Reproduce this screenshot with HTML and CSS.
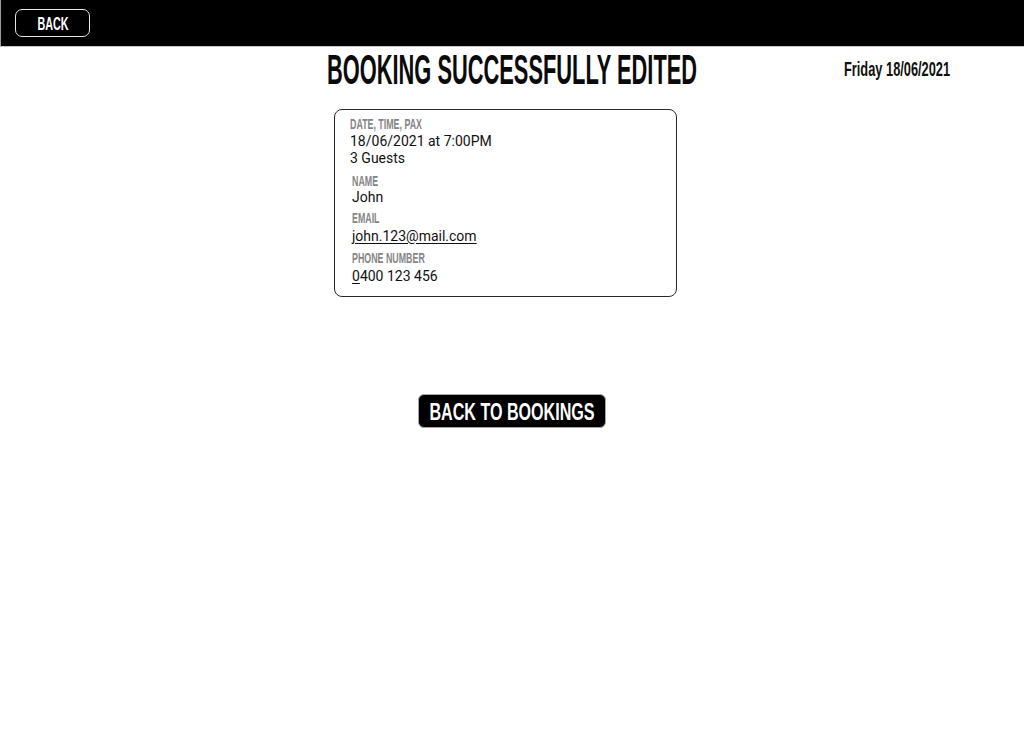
FILE: index.html
```html
<!DOCTYPE html>
<html lang="en">
<head>
<meta charset="utf-8">
<title>Booking Successfully Edited</title>
<link rel="stylesheet" href="styles.css">
</head>
<body>
<header class="topbar">
  <button class="back-btn" type="button"><span class="cond cond-back">BACK</span></button>
</header>
<main class="page">
  <div class="title-row">
    <div class="spacer"></div>
    <h1 class="title"><span class="cond cond-title">BOOKING SUCCESSFULLY EDITED</span></h1>
    <div class="date"><span class="cond cond-date">Friday 18/06/2021</span></div>
  </div>

  <section class="card">
    <div class="group g1">
      <div class="label"><span class="cond cond-label">DATE, TIME, PAX</span></div>
      <div class="value">18/06/2021 at 7:00PM</div>
      <div class="value">3 Guests</div>
    </div>
    <div class="group g2">
      <div class="label"><span class="cond cond-label">NAME</span></div>
      <div class="value">John</div>
    </div>
    <div class="group g3">
      <div class="label"><span class="cond cond-label">EMAIL</span></div>
      <div class="value tall"><span class="underline">john.123@mail.com</span></div>
    </div>
    <div class="group g4">
      <div class="label"><span class="cond cond-label">PHONE NUMBER</span></div>
      <div class="value tall"><span class="underline">0</span>400 123 456</div>
    </div>
  </section>

  <div class="actions">
    <button class="primary-btn" type="button"><span class="cond cond-primary">BACK TO BOOKINGS</span></button>
  </div>
</main>
</body>
</html>
```

FILE: styles.css
```css
* { box-sizing: border-box; }

html, body {
  margin: 0;
  padding: 0;
  background: #ffffff;
}

body {
  font-family: Roboto, "Liberation Sans", Arial, sans-serif;
  color: #111111;
}

/* condensed display text (Oswald-like) */
.cond {
  display: inline-block;
  font-family: "Liberation Sans", Arial, sans-serif;
  font-weight: bold;
  white-space: nowrap;
  transform-origin: left center;
}

/* Top bar */
.topbar {
  height: 47px;
  background: #000000;
  border-bottom: 1px solid #c8c8c8;
  border-left: 1px solid #9a9a9a;
  display: flex;
  align-items: flex-start;
  padding: 9px 0 0 14px;
}

.back-btn {
  width: 75px;
  height: 28px;
  background: #000000;
  color: #ffffff;
  border: 1px solid #e6e6e6;
  border-radius: 7px;
  padding: 0;
  display: flex;
  align-items: center;
  justify-content: center;
  cursor: pointer;
}

.cond-back {
  font-size: 18px;
  line-height: 20px;
  transform-origin: center center;
  transform: scaleX(0.6);
  margin-top: 1px;
}

/* Title row */
.title-row {
  height: 46px;
  display: grid;
  grid-template-columns: 1fr auto 1fr;
  align-items: center;
}

.title {
  margin: 0;
  width: 370px;
  font-weight: normal;
  line-height: 44px;
  padding-top: 1px;
  white-space: nowrap;
}

.cond-title {
  font-size: 42px;
  transform: scaleX(0.52);
  margin-right: -346px;
  color: #0a0a0a;
}

.date {
  justify-self: end;
  width: 106px;
  margin-right: 74px;
  margin-bottom: 3px;
  line-height: 22px;
  white-space: nowrap;
}

.cond-date {
  font-size: 21px;
  transform: scaleX(0.61);
  margin-right: -68px;
  color: #111111;
}

/* Card */
.card {
  width: 343px;
  margin: 16px 0 0 calc(50% - 178px);
  border: 1px solid #2a2a2a;
  border-radius: 8px;
  padding: 6px 12px 11px 15px;
}

.label {
  height: 16px;
  line-height: 16px;
  color: #858585;
}

.cond-label {
  font-size: 15px;
  transform: scaleX(0.59);
}

.value {
  font-size: 14px;
  line-height: 17px;
  color: #111111;
}

.value.tall {
  line-height: 18px;
}

.underline {
  text-decoration: underline;
  text-underline-offset: 2px;
}

.g1 .label { margin-bottom: 1px; }
.g3 .label, .g4 .label { margin-bottom: 1px; }

.g2, .g3, .g4 { padding-left: 2px; }
.g2 { margin-top: 6px; }
.g3 { margin-top: 4px; }
.g4 { margin-top: 5px; }

/* Action */
.actions {
  display: flex;
  justify-content: center;
  margin-top: 97px;
}

.primary-btn {
  width: 188px;
  height: 34px;
  background: #000000;
  color: #ffffff;
  border: 1px solid #a8a8a8;
  border-radius: 6px;
  padding: 0;
  display: flex;
  align-items: center;
  justify-content: center;
  cursor: pointer;
}

.cond-primary {
  font-size: 23px;
  line-height: 24px;
  transform-origin: center center;
  transform: scaleX(0.7);
  margin-top: 1px;
}
```
